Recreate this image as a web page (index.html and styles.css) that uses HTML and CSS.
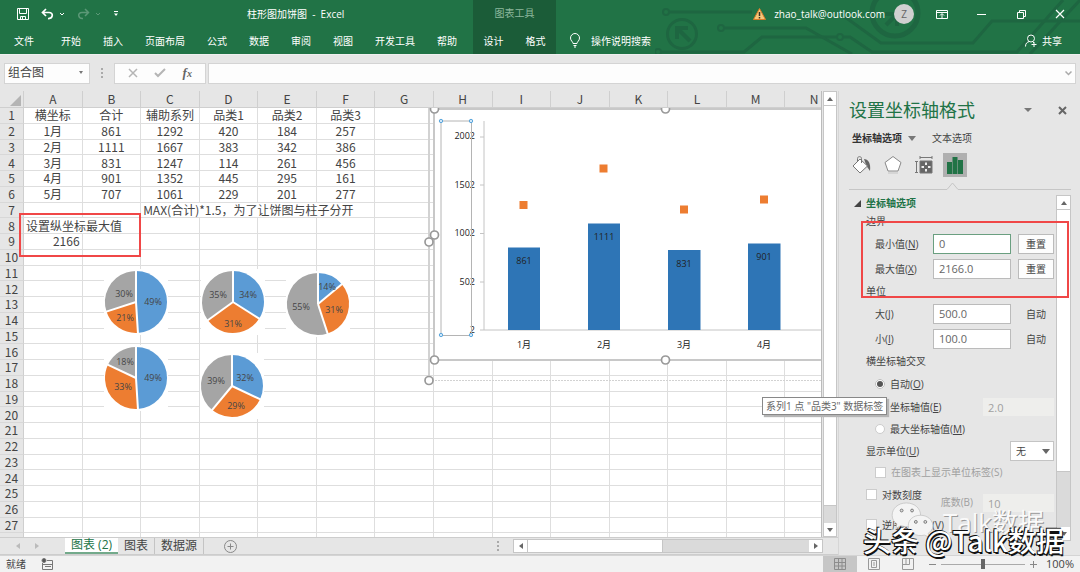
FILE: index.html
```html
<!DOCTYPE html>
<html lang="zh-CN">
<head>
<meta charset="utf-8">
<title>柱形图加饼图 - Excel</title>
<link rel="stylesheet" href="styles.css">
</head>
<body>
<header class="ribbon">
  <svg class="ribbon-art" width="425" height="54" viewBox="655 0 425 54" fill="none" stroke="#1e6641" stroke-width="3" aria-hidden="true">
    <circle cx="682" cy="34" r="14.500"/><path d="M690 41L678 29M677 39V28H688" stroke-width="4"/>
    <circle cx="666" cy="12" r="3" stroke-width="2"/><path d="M669 12H752"/>
    <circle cx="658" cy="52" r="3" stroke-width="2"/><path d="M661 52H744L762 37H836"/>
    <circle cx="721" cy="28" r="3" stroke-width="2"/><path d="M725 28H806L852 54"/>
    <circle cx="840" cy="37" r="3" stroke-width="2"/><path d="M844 37H850L872 52H1017L1063 0"/>
    <circle cx="895" cy="13" r="23" stroke-width="5"/><path d="M886 25L898 13M885 14H897V26" stroke-width="4"/>
    <path d="M845 17L881 43H973L992 21H1080M1030 54L1080 0"/>
  </svg>
  <div class="ribbon-main">
    <div class="title-row">
      <div class="quick">
        <button aria-label="保存"><svg width="12" height="12" viewBox="0 0 12 12" fill="none" stroke="#fff"><path d="M.5.5H11.500V11.500H.5ZM2.500.5V5.500H9.500V.5M3.500 11V8.500H8.500V11M5.500 9V11"/></svg></button>
        <button aria-label="撤消"><svg width="24" height="12" viewBox="0 0 24 12" fill="none" stroke="#fff" stroke-width="1.700"><path d="M5 1L1.500 4.500L5 8M2 4.500H8C13 4.500 12 11 7 10.500"/><path d="M19 5L21 7L23 5" stroke-width="1"/></svg></button>
        <button aria-label="恢复" disabled><svg width="24" height="12" viewBox="0 0 24 12" fill="none" stroke="#5c9877" stroke-width="1.500"><path d="M8 1L11.500 4.500L8 8M11 4.500H5C0 4.500 1 11 6 10.500"/><path d="M19 5L21 7L23 5" stroke-width="1"/></svg></button>
        <button aria-label="自定义"><svg width="6" height="6" viewBox="0 0 6 6" fill="#fff"><path d="M1 0H5V1H1ZM1 2.500H5L3 5Z"/></svg></button>
      </div>
      <h1>柱形图加饼图&nbsp; -&nbsp; Excel</h1>
    </div>
    <nav class="tabs"><button class="file">文件</button><button>开始</button><button>插入</button><button>页面布局</button><button>公式</button><button>数据</button><button>审阅</button><button>视图</button><button>开发工具</button><button>帮助</button></nav>
  </div>
  <div class="context">
    <div class="context-title">图表工具</div>
    <nav class="tabs"><button>设计</button><button>格式</button></nav>
  </div>
  <div class="ribbon-side">
    <div class="account">
      <svg width="13" height="12" viewBox="0 0 13 12"><path d="M6.500.5L12.500 11.500H.5Z" fill="#f6c679" stroke="#d77b27"/><path d="M6.500 4V8M6.500 9V10.500" stroke="#3a3020" stroke-width="1.500"/></svg>
      <span class="mail">zhao_talk@outlook.com</span>
      <span class="avatar">Z</span>
      <div class="window">
        <button aria-label="功能区显示选项"><svg width="12" height="10" viewBox="0 0 12 10" fill="none" stroke="#fff"><path d="M.5 1.500H11.500V9.500H.5ZM.5 3.500H11.500M6 9V5M4 6.500L6 4.500L8 6.500"/></svg></button>
        <button aria-label="最小化"><svg width="10" height="10" viewBox="0 0 10 10" stroke="#fff"><path d="M0 5.500H9"/></svg></button>
        <button aria-label="还原"><svg width="10" height="10" viewBox="0 0 10 10" fill="none" stroke="#fff"><path d="M1.500 3.500H7.500V9.500H1.500ZM3.500 3V1.500H9.500V7.500H8"/></svg></button>
        <button aria-label="关闭"><svg width="10" height="10" viewBox="0 0 10 10" stroke="#fff" stroke-width="1.200"><path d="M1 1L9 9M9 1L1 9"/></svg></button>
      </div>
    </div>
    <div class="search-row">
      <button class="tell"><svg width="12" height="15" viewBox="0 0 12 15" fill="none" stroke="#fff"><path d="M4 10.500C4 8.500 1.500 8 1.500 5A4.500 4.500 0 0 1 10.500 5C10.500 8 8 8.500 8 10.500ZM4.500 12.500H7.500M5 14H7"/></svg>操作说明搜索</button>
      <button class="share"><svg width="12" height="13" viewBox="0 0 12 13" fill="none" stroke="#fff" stroke-width="1"><circle cx="6" cy="4.500" r="3.500"/><path d="M.5 12.500C.5 9.500 2 8 4.500 7.500M7.500 7.500L9 9M9 8V13M6.500 10.500H11.500"/></svg>共享</button>
    </div>
  </div>
</header>

<section class="formula">
  <button class="name-box">组合图<svg width="6" height="4" viewBox="0 0 6 4"><path d="M1 0H5L3 3Z" fill="#777"/></svg></button>
  <span class="grip"></span>
  <div class="fx">
    <button aria-label="取消"><svg width="10" height="10" viewBox="0 0 10 10" stroke="#b5b5b5" stroke-width="1.500"><path d="M1 1L9 9M9 1L1 9"/></svg></button>
    <button aria-label="输入"><svg width="12" height="10" viewBox="0 0 12 10" fill="none" stroke="#b5b5b5" stroke-width="2"><path d="M1 5L4 8L11 1"/></svg></button>
    <button class="fx-label">f<small>x</small></button>
  </div>
  <div class="formula-input"><input type="text" aria-label="编辑栏"><svg width="7" height="5" viewBox="0 0 7 5" fill="none" stroke="#aaa" stroke-width="1.500"><path d="M.5.5L3.500 3.500L6.500.5"/></svg></div>
</section>

<main class="workspace">
  <section class="book">
    <div class="sheet-area">
      <div class="sheet">
        <table class="grid" id="grid"></table>
        <svg class="drawings" width="822" height="429" viewBox="0 108 822 429">
          <g id="pies"></g>
          <g class="frame-outer"><path d="M429 108V380" stroke="#d2d2d2" stroke-width="2"/><path d="M429 380.500H822" stroke="#d2d2d2" stroke-dasharray="2 1"/></g>
          <path d="M434 109H830V360H434Z" fill="#fff" stroke="#c8c8c8" stroke-width="2"/>
          <path d="M484 121V330H822M480 137H484M480 185H484M480 233.500H484M480 282H484M480 330H484" fill="none" stroke="#c4c4c4"/>
          <g fill="#2e75b6"><path d="M508 247.500H540V330H508ZM588 223.500H620V330H588ZM668 250H700.500V330H668ZM748 243.500H780.500V330H748Z"/></g>
          <path d="M519.500 201H527.500V209H519.500ZM599.500 164.500H607.500V172.500H599.500ZM680 205.500H688V213.500H680ZM760 195.500H768V203.500H760Z" fill="#ed7d31"/>
          <g class="chart-text end"><text x="475" y="139">2002</text><text x="475" y="188">1502</text><text x="475" y="236">1002</text><text x="475" y="285">502</text><text x="475" y="333">2</text></g>
          <g class="chart-text"><text x="524" y="264">861</text><text x="604" y="240">1111</text><text x="684" y="267">831</text><text x="764" y="260">901</text>
            <text x="524" y="348">1月</text><text x="604" y="348">2月</text><text x="684" y="348">3月</text><text x="764" y="348">4月</text></g>
          <path d="M441 121H471.500V335.500H441Z" fill="none" stroke="#b4b4b4"/>
          <g fill="#cfe6f8" stroke="#5ba7dd"><circle cx="441" cy="121" r="1.700"/><circle cx="471" cy="121" r="1.700"/><circle cx="441" cy="335" r="1.700"/><circle cx="471" cy="335" r="1.700"/></g>
          <g fill="#fff" stroke="#999" stroke-width="1.700"><circle cx="429" cy="242" r="4"/><circle cx="429" cy="380.500" r="4"/><circle cx="434.500" cy="109" r="4"/><circle cx="434.500" cy="235" r="4"/><circle cx="434.500" cy="360" r="4"/><circle cx="665.500" cy="109" r="4"/><circle cx="665.500" cy="360" r="4"/></g>
          <path d="M20 214H140V256H20Z" fill="none" stroke="#f04747" stroke-width="2"/>
        </svg>
      </div>
      <div class="vscroll sheet-scroll"><button aria-label="向上"><svg width="6" height="4"><path d="M0 4L3 0L6 4Z"/></svg></button><div class="thumb"></div><button aria-label="向下"><svg width="6" height="4"><path d="M0 0H6L3 4Z"/></svg></button></div>
    </div>
    <div class="sheet-tabs">
      <div class="tab-arrows"><svg width="4" height="6"><path d="M4 0V6L0 3Z"/></svg><svg width="4" height="6"><path d="M0 0V6L4 3Z"/></svg></div>
      <button class="sheet-tab active">图表 (2)</button><button class="sheet-tab">图表</button><button class="sheet-tab">数据源</button>
      <button class="add" aria-label="新工作表"><svg width="13" height="13" viewBox="0 0 13 13" fill="none" stroke="#888"><circle cx="6.500" cy="6.500" r="6"/><path d="M3.500 6.500H9.500M6.500 3.500V9.500"/></svg></button>
      <span class="grip"></span>
      <div class="hscroll"><button aria-label="向左"><svg width="4" height="6"><path d="M4 0V6L0 3Z"/></svg></button><div class="thumb"></div><button aria-label="向右"><svg width="4" height="6"><path d="M0 0V6L4 3Z"/></svg></button></div>
    </div>
  </section>

  <aside class="pane">
    <div class="pane-head"><h2>设置坐标轴格式</h2>
      <button aria-label="任务窗格选项"><svg width="8" height="5"><path d="M0 0H8L4 4Z"/></svg></button>
      <button aria-label="关闭窗格"><svg width="9" height="9" viewBox="0 0 9 9" stroke="#666" stroke-width="2"><path d="M1 1L8 8M8 1L1 8"/></svg></button></div>
    <div class="pane-tabs"><button class="on">坐标轴选项<svg width="8" height="5"><path d="M0 0H8L4 5Z"/></svg></button><button>文本选项</button></div>
    <div class="pane-icons">
      <button aria-label="填充与线条"><svg width="20" height="20" viewBox="0 0 20 20" fill="none" stroke="#777"><path d="M12 4C16 4 19 8 18 16L14.500 11Z" fill="#666" stroke="none"/><path d="M8 4L15.500 11L8 18L1 11Z" fill="#fff"/><path d="M5.500 7V3.500C5.500 1 9.500 1 9.500 3.500V8"/></svg></button>
      <button aria-label="效果"><svg width="20" height="20" viewBox="0 0 20 20" fill="none" stroke="#888"><path d="M10 1.500L18 7.500L15 16H5L2 7.500Z" fill="#fff"/><path d="M5 18H15" stroke="#d5d5d5" stroke-width="2"/></svg></button>
      <button aria-label="大小与属性"><svg width="20" height="20" viewBox="0 0 20 20" fill="none" stroke="#777"><path d="M6 2.500H18M6 1V4M18 1V4M2.500 6V18M1 6.500H4M1 17.500H4"/><path d="M6 6H18V18H6Z" fill="#666"/><path d="M12 7.500V10M12 14V16.500M7.500 12H10M14 12H16.500" stroke="#eee" stroke-width="2"/></svg></button>
      <button class="on" aria-label="坐标轴选项"><svg width="18" height="18" viewBox="0 0 18 18" fill="#217346"><path d="M1 6H6V18H1ZM6.500 1H11.500V18H6.500ZM12 4H17V18H12Z"/></svg></button>
    </div>
    <svg class="divider" width="222" height="8" viewBox="0 0 222 8" fill="none" stroke="#c6c6c6"><path d="M0 7.500H98L103.500 1L109 7.500H222"/></svg>
    <div class="pane-body">
      <form class="options">
        <h3><svg width="7" height="7"><path d="M7 0V7H0Z"/></svg>坐标轴选项</h3>
        <div class="sub">边界</div>
        <div class="field"><label for="min">最小值(<u>N</u>)</label><input id="min" class="focus" type="text" value="0"><button type="button">重置</button></div>
        <div class="field"><label for="max">最大值(<u>X</u>)</label><input id="max" type="text" value="2166.0"><button type="button">重置</button></div>
        <div class="sub">单位</div>
        <div class="field"><label for="major">大(<u>J</u>)</label><input id="major" type="text" value="500.0"><span>自动</span></div>
        <div class="field"><label for="minor">小(<u>I</u>)</label><input id="minor" type="text" value="100.0"><span>自动</span></div>
        <div class="sub">横坐标轴交叉</div>
        <div class="choice tall"><label><input type="radio" name="cross" checked>自动(<u>O</u>)</label></div>
        <div class="choice"><label><input type="radio" name="cross">坐标轴值(<u>E</u>)</label><input class="off" type="text" value="2.0" aria-label="坐标轴值" disabled></div>
        <div class="choice"><label><input type="radio" name="cross">最大坐标轴值(<u>M</u>)</label></div>
        <div class="unit"><label for="unit">显示单位(<u>U</u>)</label><span class="select"><select id="unit"><option>无</option></select><svg width="8" height="5"><path d="M0 0H8L4 5Z"/></svg></span></div>
        <div class="choice dim"><label><input type="checkbox" disabled>在图表上显示单位标签(S)</label></div>
        <div class="log"><label><input type="checkbox">对数刻度</label><label class="base" for="base">底数(B)</label><input id="base" class="off" type="text" value="10" disabled></div>
        <div class="reverse"><label><input type="checkbox">逆序刻度值(<u>V</u>)</label></div>
      </form>
      <div class="vscroll pane-scroll"><button aria-label="向上"><svg width="6" height="4"><path d="M0 4L3 0L6 4Z"/></svg></button><div class="thumb"></div><button aria-label="向下"><svg width="6" height="4"><path d="M0 0H6L3 4Z"/></svg></button></div>
    </div>
    <div class="callout"></div>
    <div class="tooltip" role="tooltip">系列1 点 "品类3" 数据标签</div>
    <div class="mark-back"><svg width="44" height="36" viewBox="0 0 46 38"><g fill="#f4f4f4" stroke="#bbb" stroke-width=".7"><path d="M16 1C7 1 1 7 1 14C1 18 3 21 6 23L5 28L10 25C23 29 31 22 31 14C31 7 25 1 16 1Z"/><path d="M31 14C23 14 18 19 18 25C18 32 26 37 35 35L40 37L39 33C42 31 44 29 44 25C44 19 38 14 31 14Z"/></g><g fill="#ddd" stroke="#777"><circle cx="11" cy="9" r="1.500"/><circle cx="22" cy="9" r="1.500"/><circle cx="26" cy="21" r="1.500"/><circle cx="36" cy="21" r="1.500"/></g></svg><span>Talk数据</span></div>
    <div class="mark-front">头条 @Talk数据</div>
  </aside>
</main>

<footer class="status">
  <span>就绪</span>
  <svg width="12" height="12" viewBox="0 0 12 12" fill="none" stroke="#777"><path d="M1.500 5V11.500H11.500V2.500H6M2 6.500H11M4 8.500H10" /><circle cx="3" cy="2.500" r="2" fill="#555"/></svg>
  <div class="views">
    <button class="on" aria-label="普通"><svg width="12" height="12" viewBox="0 0 12 12" fill="none" stroke="#8c8c8c"><path d="M.5.500H11.500V11.500H.5ZM.5 4.500H11.500M.5 8H11.500M4.500.5V11.500M8 .5V11.500"/></svg></button>
    <button aria-label="页面布局"><svg width="12" height="12" viewBox="0 0 12 12" fill="none" stroke="#999"><path d="M.5.500H11.500V11.500H.5ZM3.500 2.500H8.500V9.500H3.500ZM5 5H7M5 7H7"/></svg></button>
    <button aria-label="分页预览"><svg width="12" height="12" viewBox="0 0 12 12" fill="none" stroke="#999"><path d="M.5.500H11.500V11.500H.5ZM.5 6.500H7.500V.5M4 .5V6"/></svg></button>
  </div>
  <div class="zoom"><button aria-label="缩小"><svg width="7" height="7" stroke="#888"><path d="M0 3.500H7"/></svg></button><input type="range" aria-label="显示比例" min="0" max="100" value="50"><button aria-label="放大"><svg width="7" height="7" stroke="#888"><path d="M0 3.500H7M3.500 0V7"/></svg></button><span>100%</span></div>
</footer>
<script src="script.js"></script>
</body>
</html>
```

FILE: styles.css
```css
* { box-sizing: border-box; }
body {
  margin: 0;
  height: 100vh;
  display: flex;
  flex-direction: column;
  overflow: hidden;
  background: #e6e6e6;
  color: #444;
  font: 10px/14px "Open Sans", "Noto Sans CJK SC", sans-serif;
}
button, input, select { font: inherit; color: inherit; margin: 0; padding: 0; border: 0; background: none; }
button { display: flex; align-items: center; justify-content: center; white-space: nowrap; }
h1, h2, h3 { margin: 0; font-weight: 400; font-size: 10px; white-space: nowrap; }
svg { display: block; flex: none; }

/* Ribbon */
.ribbon { position: relative; display: flex; flex: none; height: 54px; background: #217346; color: #fff; }
.ribbon-art { position: absolute; right: 0; top: 0; }
.ribbon-main { width: 473px; }
.title-row { display: flex; align-items: center; height: 27px; }
.quick { display: flex; align-items: center; gap: 12px; width: 247px; padding-left: 17px; }
.tabs { display: flex; align-items: center; gap: 22px; height: 27px; }
.ribbon-main .tabs { padding-left: 14px; }
.file { margin-right: 5px; }
.context { width: 83px; background: #1b5c38; }
.context-title { height: 27px; line-height: 27px; text-align: center; color: #8db89d; }
.context .tabs { justify-content: center; }
.ribbon-side { position: relative; flex: 1; }
.account { display: flex; align-items: center; justify-content: flex-end; height: 27px; padding-right: 15px; }
.mail { margin: 0 9px 0 8px; }
.avatar { width: 20px; height: 20px; border-radius: 50%; background: #d0d0d0; color: #666; line-height: 20px; text-align: center; }
.window { display: flex; gap: 29px; margin-left: 22px; }
.search-row { display: flex; align-items: center; justify-content: space-between; height: 27px; padding: 0 18px 0 13px; }
.tell { gap: 10px; }
.share { gap: 5px; }

/* Formula bar */
.formula { display: flex; align-items: center; flex: none; height: 37px; padding: 0 4px; border-top: 1px solid #efefef; }
.name-box, .fx, .formula-input { height: 21px; background: #fdfdfd; border: 1px solid #d4d4d4; }
.name-box { width: 86px; padding: 0 5px 0 3px; justify-content: space-between; font-size: 12px; }
.grip { width: 2px; height: 10px; margin: 0 11px; border-left: 2px dotted #aaa; }
.fx { display: flex; align-items: center; justify-content: space-around; width: 92px; padding: 0 5px; }
.fx-label { font: italic bold 13px "Liberation Serif", serif; color: #666; }
.fx-label small { font-size: 10px; }
.formula-input { display: flex; align-items: center; flex: 1; margin-left: 2px; padding-right: 3px; }
.formula-input input { flex: 1; }

/* Worksheet */
.workspace { display: flex; flex: 1; min-height: 0; }
.book { display: flex; flex-direction: column; flex: 1; min-width: 0; }
.sheet-area { display: flex; flex: 1; min-height: 0; }
.sheet { position: relative; flex: 1; min-width: 0; overflow: hidden; border-right: 1px solid #bbb; }
.grid {
  width: 844px;
  height: 458px;
  table-layout: fixed;
  border-spacing: 0;
  background: #fff;
  color: #444;
  font: 12px/14px "Noto Sans CJK SC", sans-serif;
}
.grid th, .grid td { padding: 0; border: solid #dedede; border-width: 0 1px 1px 0; text-align: center; white-space: nowrap; }
.grid th { background: #e6e6e6; font-weight: 400; border-color: #cfcfcf; }
.grid thead th { height: 17px; }
.grid thead th:first-child { width: 24px; }
.grid tbody th { border-bottom-color: #d8d8d8; }
.grid .left { text-align: left; padding-left: 2px; }
.grid .right { text-align: right; padding-right: 2px; }
.grid thead svg { margin: 2px 2px 0 auto; }
.drawings { position: absolute; left: 0; top: 17px; }
.chart-text, .pie-text { font: 9px "Open Sans", "Noto Sans CJK SC", sans-serif; text-anchor: middle; fill: #222; }
.pie-text { fill: #454545; }
.end { text-anchor: end; }

.vscroll { display: flex; flex-direction: column; background: #dadada; border: 1px solid #c6c6c6; }
.vscroll button, .hscroll button { flex: none; background: #fff; fill: #666; }
.vscroll button { height: 13px; }
.vscroll .thumb { background: #fff; border: solid #c6c6c6; border-width: 1px 0; }
.vscroll button:last-child, .hscroll button:last-child { margin-top: auto; }
.sheet-scroll { width: 14px; margin: 0 1px; }
.sheet-scroll .thumb { flex: 0 1 401px; }

.sheet-tabs { display: flex; align-items: stretch; flex: none; height: 18px; border: solid #cdcdcd; border-width: 1px 0; font-size: 12px; }
.tab-arrows { display: flex; align-items: center; gap: 15px; width: 65px; padding-left: 16px; fill: #bbb; }
.sheet-tab { padding: 0 6px; border-right: 1px solid #c4c4c4; }
.sheet-tab.active { background: #fff; color: #217346; border-bottom: 2px solid #73aa8b; border-right: 0; }
.add { margin-left: 20px; }
.sheet-tabs .grip { align-self: center; margin-left: auto; }
.hscroll { display: flex; width: 310px; height: 14px; margin: 1px 15px 0 3px; background: #dadada; border: 1px solid #c6c6c6; }
.hscroll button { width: 13px; }
.hscroll button:last-child { margin: 0 0 0 auto; }
.hscroll .thumb { width: 136px; background: #fff; border: solid #c6c6c6; border-width: 0 1px; }

/* Format pane */
.pane { position: relative; display: flex; flex-direction: column; flex: none; width: 242px; border-left: 1px solid #d6d6d6; }
.pane-head { display: flex; align-items: center; height: 38px; padding: 0 13px 0 10px; fill: #777; }
.pane-head h2 { flex: 1; font-size: 18px; line-height: 26px; color: #217346; }
.pane-head button:last-child { margin-left: 26px; }
.pane-tabs { display: flex; align-items: center; gap: 16px; height: 18px; padding-left: 13px; fill: #777; }
.pane-tabs .on { gap: 6px; font-weight: 700; color: #333; }
.pane-icons { display: flex; align-items: center; gap: 7px; height: 36px; padding-left: 11px; }
.pane-icons button { width: 24px; height: 24px; }
.pane-icons .on { background: #b0b0b0; }
.divider { margin-left: 10px; margin-top: -1px; }
.pane-body { display: flex; flex: 1; min-height: 0; padding: 5px 9px 0 0; }
.options { flex: 1; min-width: 0; overflow: hidden; padding: 0 2px 0 27px; }
.options h3 { display: flex; align-items: center; gap: 5px; height: 16px; margin-left: -12px; font-weight: 700; color: #217346; fill: #444; }
.sub { height: 20px; line-height: 20px; }
.field { display: grid; grid-template-columns: 1fr 78px 36px; gap: 7px; align-items: center; height: 25px; padding-left: 9px; text-align: center; }
.field label { text-align: left; }
.options input[type="text"] { width: 100%; height: 20px; padding-left: 5px; border: 1px solid #bbb; background: #fff; font-size: 11px; color: #666; }
.options input.focus[type="text"] { border-color: #6a9f80; }
.field button { height: 20px; border: 1px solid #bbb; background: #fdfdfd; }
.choice, .unit { display: flex; align-items: center; justify-content: space-between; height: 22px; }
.choice { padding-left: 9px; }
.tall { height: 25px; }
.options label { display: flex; align-items: center; white-space: nowrap; }
.dim { color: #a0a0a0; height: 20px; }
.options input.off[type="text"] { flex: none; width: 71px; height: 18px; border: 0; background: #eeeeec; color: #a0a0a0; }
.options input[type="radio"], .options input[type="checkbox"] { appearance: none; flex: none; width: 11px; height: 11px; margin-right: 5px; border: 1px solid #ccc; background: #fff; }
.options input[type="radio"] { width: 10px; height: 10px; border-radius: 50%; }
.options input[type="radio"]:checked { border: 2px solid #fff; outline: 1px solid #bbb; outline-offset: -1px; background: #555; }
.select { position: relative; width: 44px; height: 20px; fill: #666; }
.select select { appearance: none; width: 100%; height: 100%; padding-left: 5px; border: 1px solid #c4c4c4; background: #fff; }
.select svg { position: absolute; right: 4px; top: 8px; pointer-events: none; }
.log { display: flex; align-items: flex-start; height: 30px; }
.log label { height: 25px; margin-right: auto; }
.log .base { align-self: flex-end; height: 20px; margin-right: 10px; color: #a0a0a0; }
.options .log .off { align-self: flex-end; }
.reverse { display: flex; height: 25px; }
.pane-scroll { flex: none; width: 15px; margin-bottom: 14px; }
.pane-scroll .thumb { flex: 0 1 263px; }
.callout { position: absolute; left: 22px; right: 11px; top: 130px; height: 77px; border: 2px solid #f04747; }
.tooltip { position: absolute; left: -77px; top: 306px; padding: 1px 3px; background: #fff; border: 1px solid #888; box-shadow: 2px 2px 1px #b5b5b5; color: #666; white-space: nowrap; }
.mark-back { position: absolute; right: 36px; top: 411px; display: flex; gap: 8px; color: #fafafa; font-size: 26px; line-height: 40px; text-shadow: 1px 1px 0 #999; white-space: nowrap; }
.mark-front { position: absolute; right: 16px; top: 431px; color: #fff; font: 500 28px/36px "Noto Sans CJK SC", sans-serif; text-shadow: -1px -1px 0 #111, -1px 1px 0 #111, 1px 2px 0 #111; white-space: nowrap; z-index: 1; }

/* Status bar */
.status { display: flex; align-items: center; flex: none; height: 17px; padding: 0 6px; background: #f2f2f2; border-top: 1px solid #d4d4d4; }
.status > svg { margin-left: 15px; }
.views { display: flex; margin-left: auto; }
.views button { width: 34px; height: 17px; }
.views .on { background: #c6c6c6; }
.zoom { display: flex; align-items: center; gap: 5px; margin-left: 4px; }
.zoom input { appearance: none; width: 84px; height: 12px; background: linear-gradient(#aaa, #aaa) center / 100% 1px no-repeat; }
.zoom input::-webkit-slider-thumb { appearance: none; width: 4px; height: 10px; background: #666; }
.zoom span { margin-left: 4px; font-size: 11px; }
```

FILE: script.js
```js
const columns = 'ABCDEFGHIJKLMN'.split('');
const rowCount = 28;
const values = {
  1: ['横坐标', '合计', '辅助系列', '品类1', '品类2', '品类3'],
  2: ['1月', 861, 1292, 420, 184, 257],
  3: ['2月', 1111, 1667, 383, 342, 386],
  4: ['3月', 831, 1247, 114, 261, 456],
  5: ['4月', 901, 1352, 445, 295, 161],
  6: ['5月', 707, 1061, 229, 201, 277]
};
// Cells with their own span or alignment, keyed by row and column index
const special = {
  '7-2': { text: 'MAX(合计)*1.5，为了让饼图与柱子分开', span: 4, align: 'left' },
  '8-0': { text: '设置纵坐标最大值', span: 2, align: 'left' },
  '9-0': { text: '2166', span: 1, align: 'right' }
};

let html = '<thead><tr><th><svg width="11" height="11"><path d="M11 0V11H0Z" fill="#b4b4b4"/></svg></th>' +
  columns.map(c => `<th>${c}</th>`).join('') + '</tr></thead><tbody>';
for (let r = 1; r <= rowCount; r++) {
  // The last row is mostly scrolled out of view, so it keeps its height but has no number
  html += `<tr><th>${r < rowCount ? r : '&nbsp;'}</th>`;
  for (let c = 0; c < columns.length; c++) {
    const cell = special[`${r}-${c}`];
    if (cell) {
      html += `<td class="${cell.align}" colspan="${cell.span}">${cell.text}</td>`;
      c += cell.span - 1;
    } else {
      html += `<td>${values[r]?.[c] ?? ''}</td>`;
    }
  }
  html += '</tr>';
}
document.getElementById('grid').innerHTML = html + '</tbody>';

// Centre, slice percentages, and label positions relative to the centre
const pies = [
  { x: 136, y: 302, parts: [49, 21, 30], labels: [[17, 3], [-11, 19], [-12, -5]] },
  { x: 233, y: 302, parts: [34, 31, 35], labels: [[15, -4], [0, 25], [-15, -4]] },
  { x: 318, y: 304, parts: [14, 31, 55], labels: [[9, -14], [16, 9], [-17, 6]] },
  { x: 136, y: 378, parts: [49, 33, 18], labels: [[17, 3], [-13, 12], [-11, -13]] },
  { x: 232, y: 386, parts: [32, 29, 39], labels: [[13, -5], [4, 23], [-16, -2]] }
];
const colors = ['#5b9bd5', '#ed7d31', '#a5a5a5'];
document.getElementById('pies').innerHTML = pies.map(p => {
  let start = 0, slices = '', lines = '', texts = '';
  p.parts.forEach((v, i) => {
    slices += `<circle r="15.500" pathLength="100" fill="none" stroke="${colors[i]}" stroke-width="31" stroke-dasharray="${v} ${100 - v}" transform="rotate(${start * 3.6 - 90})"/>`;
    lines += `<path d="M0 0V-32" stroke="#fff" stroke-width="2" transform="rotate(${start * 3.6})"/>`;
    texts += `<text class="pie-text" x="${p.labels[i][0]}" y="${p.labels[i][1]}">${v}%</text>`;
    start += v;
  });
  return `<g transform="translate(${p.x} ${p.y})"><path d="M-32 -33H32V33H-32Z" fill="#fff"/>${slices}${lines}${texts}</g>`;
}).join('');
```
